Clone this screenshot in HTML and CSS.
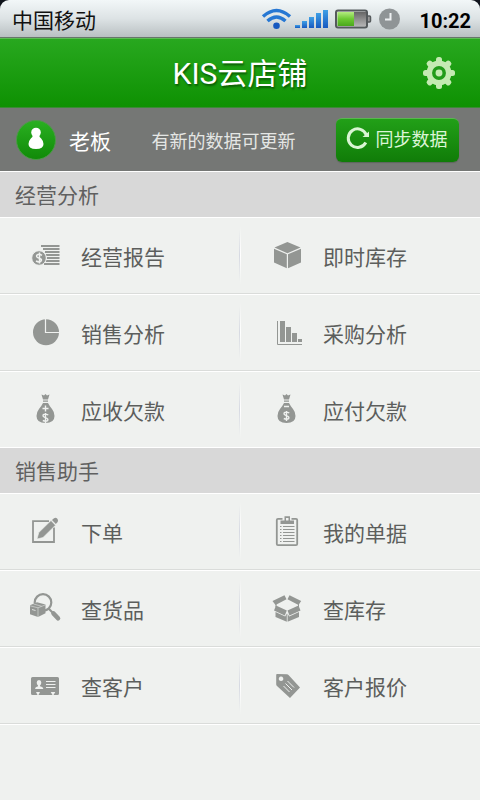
FILE: index.html
```html
<!DOCTYPE html>
<html lang="zh-CN">
<head>
<meta charset="utf-8">
<meta name="viewport" content="width=device-width, initial-scale=1">
<title>KIS云店铺</title>
<link rel="stylesheet" href="styles.css">
</head>
<body>
<div class="status-wrap">
  <div class="status">
    <span class="carrier">中国移动</span>
    <svg class="status-icons" width="142" height="24" viewBox="259 7 142 24" aria-hidden="true">
      <defs>
        <linearGradient id="blue" x1="0" y1="0" x2="0" y2="1"><stop offset="0" stop-color="#3fa0e6"/><stop offset="1" stop-color="#1759c0"/></linearGradient>
        <linearGradient id="charge" x1="0" y1="0" x2="0" y2="1"><stop offset="0" stop-color="#b4ec80"/><stop offset=".5" stop-color="#6cc832"/><stop offset="1" stop-color="#4aa81c"/></linearGradient>
        <linearGradient id="empty" x1="0" y1="0" x2="0" y2="1"><stop offset="0" stop-color="#666"/><stop offset="1" stop-color="#b4b4b4"/></linearGradient>
      </defs>
      <g fill="none" stroke="#2677d3" stroke-width="3.400">
        <path d="M262 16.500Q275.500 4.500 289 16.500"/>
        <path d="M266.500 21Q275.500 13 284.500 21"/>
      </g>
      <circle cx="275.500" cy="25.800" r="3.300" fill="#1759c0"/>
      <g fill="url(#blue)">
        <path d="M294 25h5v3h-5z"/><path d="M301 21h5v7h-5z"/><path d="M308 17h5v11h-5z"/><path d="M315 13h5v15h-5z"/><path d="M322 10h5v18h-5z"/>
      </g>
      <rect x="335" y="10.500" width="31" height="17" rx="2" fill="#ddd" stroke="#555a5c" stroke-width="2"/>
      <path d="M336.500 12H353v14h-16.500z" fill="url(#charge)"/><path d="M353 12h12v14h-12z" fill="url(#empty)"/>
      <path d="M367 16h1.500q1 0 1 1v4q0 1-1 1H367" fill="#999" stroke="#555a5c" stroke-width="1.500"/>
      <circle cx="388.500" cy="19" r="10.500" fill="#8f9496"/>
      <path d="M389.500 13v6.500H384" fill="none" stroke="#edf0f1" stroke-width="2"/>
    </svg>
    <time class="clock">10:22</time>
  </div>
</div>

<header class="titlebar">
  <h1>KIS云店铺</h1>
  <button class="settings" type="button" aria-label="设置">
    <svg width="34" height="34" viewBox="-17 -17 34 34" aria-hidden="true">
      <g fill="#c4eab2">
        <g id="teeth"><rect x="-3" y="-16" width="6" height="32" rx="2.500"/><rect x="-16" y="-3" width="32" height="6" rx="2.500"/></g>
        <use href="#teeth" transform="rotate(45)"/>
        <circle r="12.500"/>
      </g>
      <circle r="5.200" fill="none" stroke="#219b19" stroke-width="3.500"/>
    </svg>
  </button>
</header>

<div class="userbar">
  <svg class="avatar" width="40" height="40" viewBox="0 0 40 40" aria-hidden="true">
    <defs><linearGradient id="disc" x1="0" y1="0" x2="0" y2="1"><stop offset="0" stop-color="#2ab021"/><stop offset="1" stop-color="#108a08"/></linearGradient></defs>
    <circle cx="20" cy="20" r="19.500" fill="url(#disc)" stroke="#4d9a48" stroke-width="1"/>
    <circle cx="20" cy="12.500" r="4.800" fill="#fff"/>
    <path fill="#fff" d="M17 15h6q.3 2 2.200 3.500Q27.500 21 27.500 24q0 5-7.500 5t-7.500-5q0-3 2.300-5.500Q16.700 17 17 15z"/>
  </svg>
  <span class="name">老板</span>
  <span class="notice">有新的数据可更新</span>
  <button class="sync" type="button">
    <svg width="24" height="24" viewBox="0 0 24 24" aria-hidden="true">
      <path d="M19.800 16.500A9.300 9.300 0 1 1 20.300 9" fill="none" stroke="#d9f5d3" stroke-width="3"/>
      <path d="M23 5.500V11h-6.500z" fill="#d9f5d3"/>
    </svg>
    <span>同步数据</span>
  </button>
</div>

<main>
  <section>
    <h2>经营分析</h2>
    <ul class="menu">
      <li><a href="#report">
        <svg class="icon" viewBox="0 0 35 35" aria-hidden="true">
          <path stroke="#939693" stroke-width="2" d="M13 8h18.500M15 11h16.500M17 14h14.500M18 17h13.500M19 20h12.500M18 23h13.500M16 26h15.500"/>
          <circle cx="11" cy="20" r="7.300" fill="#939693" stroke="#eff1ef"/>
          <path fill="none" stroke="#eff1ef" stroke-width="1.500" d="M14 17.300q-3-1.800-5-.3-1.300 2 1.700 3 3.800 1 2.300 3.200-2 1.500-5-.2M11.500 14.500v11"/>
        </svg><span>经营报告</span></a></li>
      <li><a href="#stock">
        <svg class="icon" viewBox="0 0 35 35" aria-hidden="true">
          <path fill="#939693" d="M17.400 4 30.500 9.500 17.400 15.200 4.500 9.500zM4 10.700l12.800 5.500v14L4 24.500zM31 10.700 18 16.200v14l13-5.700z"/>
        </svg><span>即时库存</span></a></li>
      <li><a href="#sales">
        <svg class="icon" viewBox="0 0 35 35" aria-hidden="true">
          <circle cx="18" cy="17.300" r="13" fill="#939693"/>
          <path fill="none" stroke="#eff1ef" stroke-width="1.200" d="M17.500 4v13.500H32"/>
        </svg><span>销售分析</span></a></li>
      <li><a href="#purchase">
        <svg class="icon" viewBox="0 0 35 35" aria-hidden="true">
          <path fill="none" stroke="#939693" d="M7.500 6v23.500H32"/>
          <path fill="#939693" d="M10 6h5v21h-5zM16 12h5v15h-5zM22 18h5v9h-5zM28 24h4v3h-4z"/>
        </svg><span>采购分析</span></a></li>
      <li><a href="#receivable">
        <svg class="icon" viewBox="0 0 35 35" aria-hidden="true">
          <path fill="#939693" d="M13.500 2.500l2.500 1 1.500-1.500L19 3.500l2.500-1-1.500 5h-5zM15 8.500h5v1.300h-5zM15 11h5q1.500 3 4 6t2.500 7q0 7-9 7t-9-7q0-4 2.500-7t4-6z"/>
          <path fill="none" stroke="#eff1ef" stroke-width="1.400" d="M14.500 16.500h6M17.500 13.500v6M20.300 23q-3-1.600-5-.3-1 2 2 3 3.500 1 2.300 3-2 1.200-4.800-.2M17.500 21v10"/>
        </svg><span>应收欠款</span></a></li>
      <li><a href="#payable">
        <svg class="icon" viewBox="-1 0 35 35" aria-hidden="true">
          <path fill="#939693" d="M11.500 2.500l2.500 1 1.500-1.500L17 3.500l2.500-1-1.500 5h-5zM13 8.500h5v1.300h-5zM13 11h5q1.500 3 4 6t2.500 7q0 7-9 7t-9-7q0-4 2.500-7t4-6z"/>
          <path fill="none" stroke="#eff1ef" stroke-width="1.400" d="M13 14.500h5M18.300 21q-3-1.600-5-.3-1 2 2 3 3.500 1 2.300 3-2 1.200-4.800-.2M15.500 19v10"/>
        </svg><span>应付欠款</span></a></li>
    </ul>
  </section>

  <section>
    <h2>销售助手</h2>
    <ul class="menu menu-closed">
      <li><a href="#order">
        <svg class="icon" viewBox="0 0 35 35" aria-hidden="true">
          <path fill="none" stroke="#939693" stroke-width="1.800" d="M21 7.200H5V28h21V13.500"/>
          <path fill="#939693" stroke="#eff1ef" stroke-width=".6" d="M9 25l1.800-6.500L23 6.500l4.500 4.700L15 23.500z"/>
          <path fill="#939693" d="M24 6l2-1.800q2-1 3.300.5t.4 3.200l-1.900 2z"/>
        </svg><span>下单</span></a></li>
      <li><a href="#bills">
        <svg class="icon" viewBox="0 0 35 35" aria-hidden="true">
          <path fill="none" stroke="#939693" stroke-width="1.800" d="M12.500 4.800H8q-1.200 0-1.200 1.200v24q0 1.200 1.200 1.200h18q1.200 0 1.200-1.200V6q0-1.200-1.200-1.200h-4.500"/>
          <path fill="#939693" fill-rule="evenodd" d="M10.500 10V6.500h4V2.200h5.500v4.300h4V10zM16 4v2.500h2.500V4z"/>
          <path stroke="#939693" stroke-width="1" d="M10 12.500h1.500M13 12.500h11.500M10 15.500h1.500M13 15.500h11.500M10 18.500h1.500M13 18.500h11.500M10 21.500h1.500M13 21.500h11.500M10 24.500h1.500M13 24.500h11.500M10 27.500h1.500M13 27.500h11.500"/>
        </svg><span>我的单据</span></a></li>
      <li><a href="#goods">
        <svg class="icon" viewBox="0 0 35 35" aria-hidden="true">
          <circle cx="15" cy="11.500" r="8.300" fill="none" stroke="#939693" stroke-width="2.200"/>
          <path stroke="#939693" stroke-width="2.200" d="M20.500 17.500l4 4"/>
          <path stroke="#939693" stroke-width="4.600" stroke-linecap="round" d="M25.500 22.500l4.500 4.800"/>
          <path fill="#939693" d="M2 14.300l7-3 8.500 2.200v8.700L10 26l-8-2.700z"/>
          <path fill="none" stroke="#eff1ef" stroke-width=".5" d="M2 14.800l8 2 7.500-3M10 16.800V26M5.500 13l8 2.200"/>
          <path stroke="#eff1ef" stroke-width=".8" d="M4 18.500l3.500 1"/>
        </svg><span>查货品</span></a></li>
      <li><a href="#inventory">
        <svg class="icon" viewBox="0 0 35 35" aria-hidden="true">
          <path fill="#939693" d="M14.500 4.300l2 4L5.500 14 2.500 10zM19.500 4.300l-2 4L28.500 14l2.700-4zM6 14.500l10.800 5-2 5L4 19.500zM28.500 14.500l-11 5 2 5L30.500 19.500zM5.500 21l9.700 4.500 1.600-3v8.200L5.500 26zM29 21 19.200 25.500l-1.600-3v8.200L29 26z"/>
          <path stroke="#939693" d="M6 13v3M28.500 13v3"/>
        </svg><span>查库存</span></a></li>
      <li><a href="#customers">
        <svg class="icon" viewBox="0 0 35 35" aria-hidden="true">
          <path fill="#939693" d="M4.500 9h25q1.500 0 1.500 1.500v15q0 1.500-1.500 1.500h-4l1.800-3h-4.600l1.800 3H10.500l1.500-3H8l1.500 3h-5Q3 27 3 25.500v-15Q3 9 4.500 9z"/>
          <path fill="#eff1ef" d="M11 12q2.300 0 2.300 2.500 0 2-1.300 3v.7q3.300.8 3.300 2.800H7q0-2 3-2.800v-.7q-1.300-1-1.300-3Q8.700 12 11 12z"/>
          <path stroke="#eff1ef" stroke-width="1.200" d="M18 13.500h9.500M18 16.500h9.500M18 19.500h9.500"/>
        </svg><span>查客户</span></a></li>
      <li><a href="#quote">
        <svg class="icon" viewBox="0 0 35 35" aria-hidden="true">
          <path fill="#939693" fill-rule="evenodd" d="M7 6l10 .3q.8 0 1.500.7L30 19.500 20 30 7 18q-.8-.8-.8-1.800V7q0-1 .8-1zM11 8.500a2.300 2.300 0 1 0 .1 0z"/>
          <path fill="none" stroke="#eff1ef" stroke-width="1" d="M17.500 13l6.500 6.500M15.500 15.500l6.500 6.500M13.500 18l6 6"/>
        </svg><span>客户报价</span></a></li>
    </ul>
  </section>
</main>
</body>
</html>
```

FILE: styles.css
```css
* {
  box-sizing: border-box;
}

body {
  margin: 0;
  min-height: 100vh;
  background: #eff1ef;
  color: #5c5e5c;
  font-family: Roboto, "Noto Sans CJK SC", sans-serif;
  font-size: 21px;
}

button {
  border: 0;
  padding: 0;
  font: inherit;
  cursor: pointer;
}

svg {
  display: block;
  flex: none;
}

.status-wrap {
  background: #10141c;
}

.status {
  display: flex;
  align-items: center;
  height: 38px;
  padding: 0 9px 0 12px;
  border-bottom: 1px solid #66776a;
  border-radius: 9px 9px 0 0;
  background: linear-gradient(#f2f7f8, #dde3e5 50%, #b9c0c2);
  color: #111;
}

.status-icons {
  margin-left: auto;
}

.clock {
  margin-left: 17px;
  padding-top: 4px;
  color: #000;
  font-size: 20px;
  font-weight: 700;
}

.titlebar {
  display: grid;
  grid-template-columns: 1fr auto 1fr;
  align-items: center;
  height: 70px;
  padding: 0 24px;
  border-top: 1px solid #5dbb55;
  border-bottom: 1px solid #3c8a36;
  background: linear-gradient(#28a81f, #0e9102);
}

.titlebar h1 {
  grid-column: 2;
  margin: 0;
  padding-top: 2px;
  color: #fff;
  font-size: 30px;
  font-weight: 400;
  line-height: 40px;
  text-shadow: 1px 2px 2px #0b5c05;
}

.settings {
  justify-self: end;
  background: none;
}

.userbar {
  display: flex;
  align-items: center;
  height: 63px;
  padding: 0 21px 0 16px;
  background: #757775;
  color: #fff;
}

.name {
  margin-left: 13px;
}

.notice {
  margin: 0 auto;
  color: #e4e6e4;
  font-size: 18px;
}

.sync {
  display: flex;
  align-items: center;
  justify-content: center;
  gap: 6px;
  width: 123px;
  height: 44px;
  padding: 0 2px 4px 0;
  border-top: 1px solid #58b84f;
  border-radius: 6px;
  background: linear-gradient(#22a018, #107c08);
  box-shadow: 0 1px 1px #5d655c;
  color: #dcf5d7;
  font-size: 18px;
}

h2 {
  height: 47px;
  margin: 0;
  padding: 0 15px;
  border-top: 1px solid #fff;
  border-bottom: 1px solid #fff;
  background: #d8d8d8;
  color: #606060;
  font-size: 21px;
  font-weight: 400;
  line-height: 48px;
}

.menu {
  display: grid;
  grid-template-columns: 1fr 1fr;
  row-gap: 1px;
  margin: 0;
  padding: 0;
  list-style: none;
}

.menu li {
  border-bottom: 1px solid #dadcda;
  box-shadow: 0 1px #fff;
}

.menu:not(.menu-closed) li:nth-last-child(-n+2) {
  border-bottom: 0;
  box-shadow: none;
}

.menu a {
  display: flex;
  align-items: center;
  gap: 18px;
  height: 75px;
  padding-left: 28px;
  color: inherit;
  text-decoration: none;
}

.menu li:nth-child(odd) a {
  background: linear-gradient(#eff1ef00 15%, #d6d9e2 50%, #eff1ef00 85%) right / 1px 100% no-repeat;
}

.menu li:nth-child(even) a {
  padding-left: 30px;
  background: linear-gradient(#fff0 10%, #fff 50%, #fff0 90%) left / 1px 100% no-repeat;
}

.icon {
  width: 35px;
  height: 35px;
}
```
